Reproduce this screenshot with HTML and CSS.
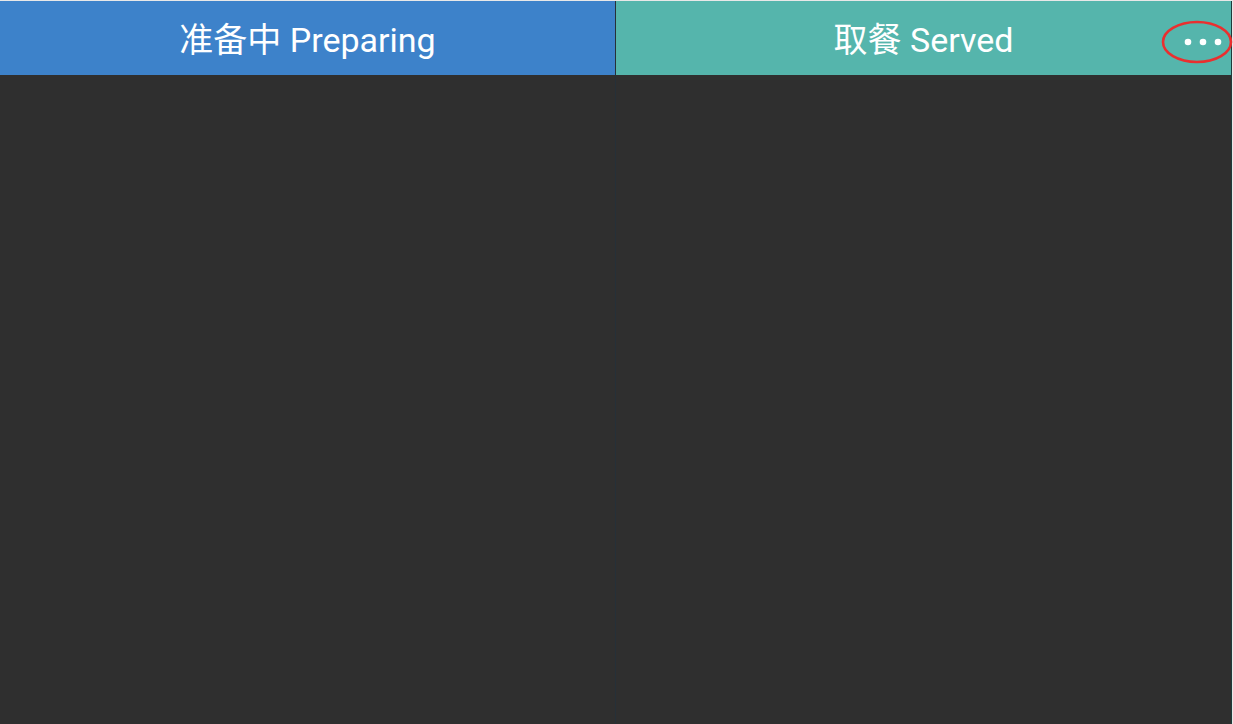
FILE: index.html
```html
<!DOCTYPE html>
<html lang="zh">
  <head>
    <meta charset="UTF-8" />
    <meta name="viewport" content="width=device-width, initial-scale=1.0" />
    <title>Order Board</title>
    <link rel="stylesheet" href="styles.css">
  </head>
  <body>
    <div class="board">
      <div class="column">
        <div class="column-header preparing">准备中 Preparing</div>
        <div class="column-body"></div>
      </div>
      <div class="divider"></div>
      <div class="column">
        <div class="column-header served">
          取餐 Served
          <button class="more-btn" aria-label="more">
            <svg width="72" height="44" viewBox="0 0 72 44">
              <ellipse cx="36" cy="22" rx="34" ry="20" fill="none" stroke="#ea2f2f" stroke-width="2.6" />
              <circle cx="27" cy="22" r="3.3" fill="#fff" />
              <circle cx="42" cy="22" r="3.3" fill="#fff" />
              <circle cx="57" cy="22" r="3.3" fill="#fff" />
            </svg>
          </button>
        </div>
        <div class="column-body"></div>
      </div>
      <div class="edge"></div>
    </div>
  </body>
</html>
```

FILE: styles.css
```css
* {
  margin: 0;
  padding: 0;
  box-sizing: border-box;
}

body {
  font-family: Roboto, "Noto Sans CJK SC", sans-serif;
  background: #e8e8e8;
  height: 100vh;
  padding-top: 1px;
  overflow: hidden;
}

.board {
  display: flex;
  height: 100%;
  width: 1232px;
}

.column {
  width: 615px;
  display: flex;
  flex-direction: column;
}

.column-header {
  height: 74px;
  display: flex;
  justify-content: center;
  align-items: center;
  color: #fff;
  font-size: 34px;
  padding-bottom: 2px;
  position: relative;
}

.preparing {
  background: #3d82ca;
}

.served {
  background: #55b5ac;
}

.column-body {
  flex: 1;
  background: #2f2f2f;
}

.divider {
  width: 1px;
  background: #263038;
}

.edge {
  width: 1px;
  background: #1f3b3b;
}

.more-btn {
  position: absolute;
  right: -2px;
  top: 19px;
  border: none;
  background: none;
  cursor: pointer;
  display: flex;
}
```
